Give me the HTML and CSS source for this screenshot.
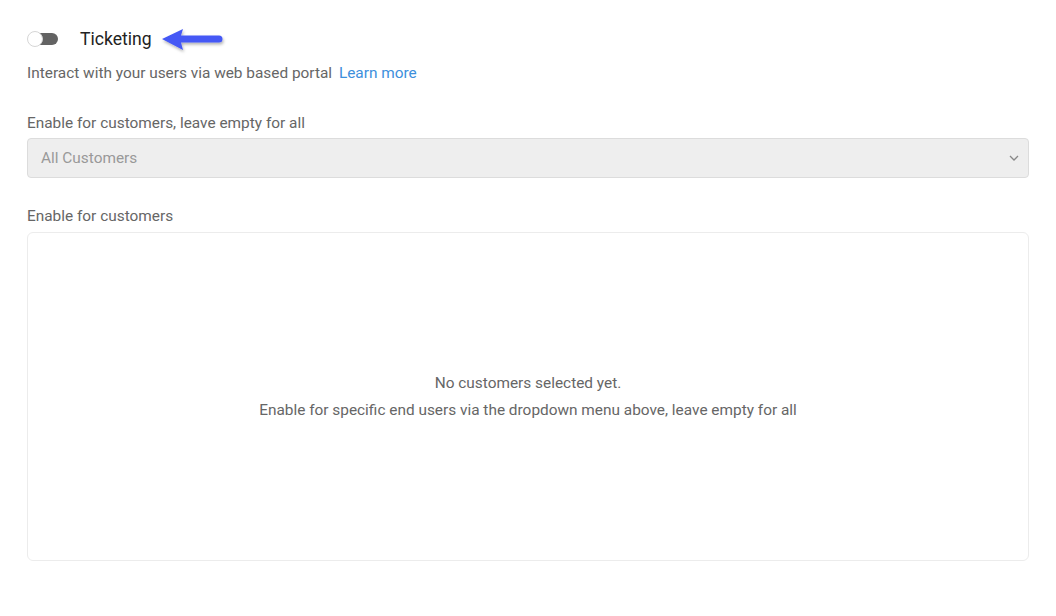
FILE: index.html
```html
<!DOCTYPE html>
<html>
<head>
<meta charset="utf-8">
<link rel="stylesheet" href="styles.css">
</head>
<body>
<div class="page">
  <div class="header">
    <span class="toggle"><span class="knob"></span></span>
    <span class="title">Ticketing</span>
    <svg class="arrow" width="68" height="30" viewBox="0 0 68 30">
      <defs>
        <filter id="sh" x="-20%" y="-40%" width="140%" height="180%">
          <feDropShadow dx="1" dy="2" stdDeviation="1.5" flood-color="#000" flood-opacity="0.3"/>
        </filter>
      </defs>
      <g filter="url(#sh)">
        <path d="M1 13 L22 3 L20 9.5 L58 9.5 A3.5 3.5 0 0 1 58 16.5 L20 16.5 L22 24 Z" fill="#4559f5"/>
      </g>
    </svg>
  </div>
  <p class="desc">Interact with your users via web based portal <a class="link" href="#">Learn more</a></p>

  <label class="label first">Enable for customers, leave empty for all</label>
  <div class="select">
    <span class="placeholder">All Customers</span>
    <svg class="chev" width="10" height="6" viewBox="0 0 10 6"><path d="M1 1 L5 5 L9 1" fill="none" stroke="#888" stroke-width="1.3"/></svg>
  </div>

  <label class="label second">Enable for customers</label>
  <div class="empty">
    <div class="empty-line">No customers selected yet.</div>
    <div class="empty-line">Enable for specific end users via the dropdown menu above, leave empty for all</div>
  </div>
</div>
</body>
</html>
```
FILE: styles.css
```css
html, body {
  margin: 0;
  padding: 0;
  background: #fff;
}
body {
  font-family: Roboto, "Liberation Sans", sans-serif;
  color: #666;
  font-size: 15.4px;
}
.page {
  padding: 27px 27px 0 27px;
  display: flex;
  flex-direction: column;
}
.header {
  display: flex;
  align-items: center;
  height: 24px;
}
.toggle {
  position: relative;
  width: 31px;
  height: 16px;
  display: inline-block;
}
.toggle::before {
  content: "";
  position: absolute;
  left: 6px;
  top: 2px;
  width: 25px;
  height: 12px;
  border-radius: 6px;
  background: #636363;
}
.knob {
  position: absolute;
  left: 0;
  top: 0;
  width: 14px;
  height: 14px;
  border-radius: 50%;
  background: #fff;
  border: 1px solid #d6d6d6;
}
.title {
  margin-left: 22px;
  font-size: 17.6px;
  color: #222;
}
.arrow {
  margin-left: 9px;
  margin-top: 4px;
}
.desc {
  margin: 12px 0 0 0;
  line-height: 20px;
}
.link {
  color: #3d8fdc;
  text-decoration: none;
  margin-left: 3px;
}
.label {
  display: block;
  line-height: 20px;
}
.label.first {
  margin-top: 30px;
}
.select {
  margin-top: 5px;
  height: 38px;
  border: 1px solid #dcdcdc;
  border-radius: 4px;
  background: #eeeeee;
  display: flex;
  align-items: center;
  justify-content: space-between;
  padding: 0 9px 0 13px;
}
.placeholder {
  color: #999;
}
.label.second {
  margin-top: 28px;
}
.empty {
  margin-top: 6px;
  height: 327px;
  border: 1px solid #ececec;
  border-radius: 6px;
  display: flex;
  flex-direction: column;
  justify-content: center;
  align-items: center;
}
.empty-line {
  line-height: 27px;
}
```
